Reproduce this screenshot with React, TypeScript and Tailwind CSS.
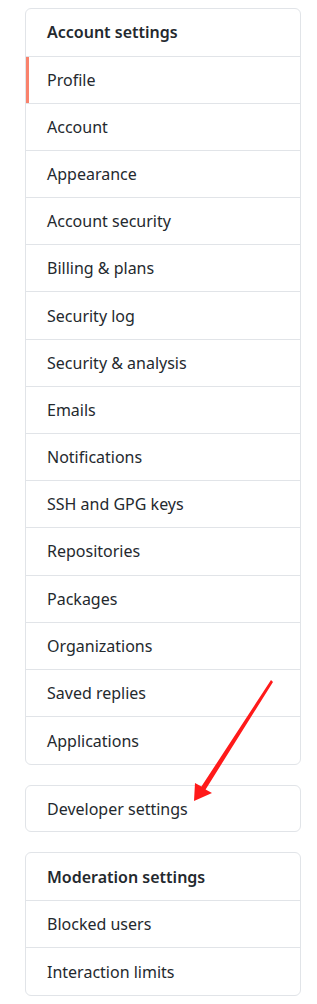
import React from "react";

const items = [
  "Profile",
  "Account",
  "Appearance",
  "Account security",
  "Billing & plans",
  "Security log",
  "Security & analysis",
  "Emails",
  "Notifications",
  "SSH and GPG keys",
  "Repositories",
  "Packages",
  "Organizations",
  "Saved replies",
  "Applications",
];

function Row({ label, active, last, tall }: { label: string; active?: boolean; last?: boolean; tall?: string }) {
  return (
    <div
      className={
        "relative flex items-center pl-[21px] text-[16px] text-[#24292e] " +
        (tall ?? "h-[47.2px] ") +
        (last ? "" : " border-b border-[#e1e4e8]")
      }
    >
      {active && <span className="absolute left-0 top-0 h-full w-[3px] bg-[#f9826c]" />}
      {label}
    </div>
  );
}

function Header({ label }: { label: string }) {
  return (
    <div className="flex h-[47.5px] items-center border-b border-[#e1e4e8] pl-[21px] text-[16px] font-semibold text-[#24292e]">
      {label}
    </div>
  );
}

export default function App() {
  return (
    <div
      className="relative min-h-[1004px] w-[317px] bg-white"
      style={{ fontFamily: '"Noto Sans", "Open Sans", sans-serif' }}
    >
      <div className="flex w-[301px] flex-col gap-[20px] pl-[25px] pt-[8px]">
        <div className="overflow-hidden rounded-[6px] border border-[#e1e4e8]">
          <Header label="Account settings" />
          {items.map((it, i) => (
            <Row key={it} label={it} active={i === 0} last={i === items.length - 1} />
          ))}
        </div>
        <div className="overflow-hidden rounded-[6px] border border-[#e1e4e8]">
          <Row label="Developer settings" last tall="h-[45px]" />
        </div>
        <div className="overflow-hidden rounded-[6px] border border-[#e1e4e8]">
          <Header label="Moderation settings" />
          <Row label="Blocked users" />
          <Row label="Interaction limits" last />
        </div>
      </div>
      <svg className="pointer-events-none absolute left-0 top-0" width="317" height="1004">
        <polygon
          points="271,680 273,682 205.6,789.4 212,793 194,801 195,783 201.4,786.6"
          fill="#ff1a1a"
        />
      </svg>
    </div>
  );
}
